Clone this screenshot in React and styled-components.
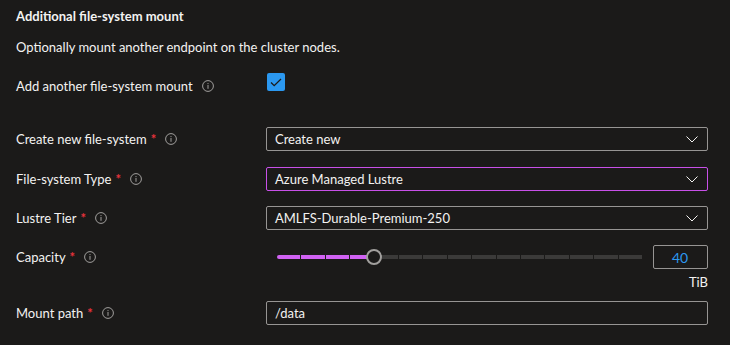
import React from 'react'
import styled, { createGlobalStyle } from 'styled-components'

const colors = {
  bg: '#1b1a19',
  text: '#f3f2f1',
  border: '#979593',
  focus: '#c850e8',
  fill: '#d062f2',
  rail: '#3b3a39',
  blue: '#2b98f0',
  required: '#e8323c',
  icon: '#a19f9d',
}

const GlobalStyle = createGlobalStyle`
  html, body {
    margin: 0;
    padding: 0;
    background: ${colors.bg};
  }
  body {
    font-family: Lato, 'Noto Sans', sans-serif;
    font-size: 13px;
    color: ${colors.text};
  }
`

const StRoot = styled.div`
  width: 730px;
  height: 345px;
  box-sizing: border-box;
  padding: 6px 22px 0 16px;
  background: ${colors.bg};
  display: flex;
  flex-direction: column;
`
const StTitle = styled.h2`
  margin: 0;
  font-size: 13px;
  font-weight: 700;
  line-height: 20px;
`
const StDescription = styled.p`
  margin: 11px 0 16px;
  line-height: 20px;
`
const StRow = styled.div`
  display: grid;
  grid-template-columns: 250px 442px;
  align-items: ${(p) => (p.$top ? 'start' : 'center')};
  margin-top: ${(p) => p.$gap || 0}px;
`
const StLabel = styled.div`
  display: flex;
  align-items: center;
  line-height: 20px;
  padding-top: ${(p) => p.$offset || 0}px;
`
const StRequired = styled.span`
  color: ${colors.required};
  margin-left: 4px;
  font-weight: 700;
`
const StInfo = styled.svg`
  width: 12px;
  height: 12px;
  margin-left: 9px;
  flex-shrink: 0;
`
const StCheckbox = styled.div`
  width: 18px;
  height: 18px;
  border-radius: 2px;
  background: ${colors.blue};
  display: flex;
  align-items: center;
  justify-content: center;
  margin-left: 1px;
`
const StBox = styled.div`
  height: 24px;
  box-sizing: border-box;
  border: 1px solid ${(p) => (p.$focused ? colors.focus : colors.border)};
  border-radius: 2px;
  display: flex;
  align-items: center;
  justify-content: ${(p) => (p.$center ? 'center' : 'space-between')};
  padding: 0 9px 0 8px;
  color: ${(p) => p.$color || colors.text};
`
const StField = styled.div`
  display: flex;
  flex-direction: column;
  align-items: flex-end;
`
const StSliderRow = styled.div`
  display: flex;
  align-items: center;
  gap: 11px;
  padding-left: 11px;
  align-self: stretch;
`
const StTrack = styled.div`
  flex: 1;
  height: 4px;
  position: relative;
  display: flex;
  gap: 1px;
`
const StSegment = styled.div`
  flex: 1;
  height: 4px;
  background: ${(p) => (p.$filled ? colors.fill : colors.rail)};
  &:first-child {
    border-radius: 2px 0 0 2px;
  }
  &:last-child {
    border-radius: 0 2px 2px 0;
  }
`
const StThumb = styled.div`
  position: absolute;
  top: 50%;
  width: 16px;
  height: 16px;
  box-sizing: border-box;
  border-radius: 50%;
  border: 2px solid ${colors.icon};
  background: ${colors.bg};
  transform: translate(-50%, -50%);
`
const StValue = styled(StBox)`
  width: 55px;
  font-size: 14px;
`
const StUnit = styled.div`
  line-height: 16px;
  margin-top: 5px;
  font-size: 13px;
`

const InfoIcon = () => (
  <StInfo viewBox='0 0 12 12'>
    <circle cx='6' cy='6' r='5.4' fill='none' stroke={colors.icon} strokeWidth='1' />
    <rect x='5.5' y='5' width='1' height='3.8' fill={colors.icon} />
    <circle cx='6' cy='3.6' r='0.6' fill={colors.icon} />
  </StInfo>
)

const Chevron = () => (
  <svg width='12' height='7' viewBox='0 0 12 7'>
    <path d='M0.5 0.5 L6 6 L11.5 0.5' fill='none' stroke={colors.text} strokeWidth='1' />
  </svg>
)

const Label = ({ children, required, offset }) => (
  <StLabel $offset={offset}>
    {children}
    {required && <StRequired>*</StRequired>}
    <InfoIcon />
  </StLabel>
)

const Dropdown = ({ value, focused }) => (
  <StBox $focused={focused}>
    <span>{value}</span>
    <Chevron />
  </StBox>
)

const SEGMENTS = 15
const FILLED = 4

const App = () => (
  <StRoot>
    <GlobalStyle />
    <StTitle>Additional file-system mount</StTitle>
    <StDescription>Optionally mount another endpoint on the cluster nodes.</StDescription>

    <StRow $top>
      <Label offset={3}>Add another file-system mount</Label>
      <StCheckbox>
        <svg width='12' height='9' viewBox='0 0 12 9'>
          <path d='M1 4.5 L4.2 7.7 L11 1' fill='none' stroke='#1b1a19' strokeWidth='1.3' />
        </svg>
      </StCheckbox>
    </StRow>

    <StRow $gap={31}>
      <Label required>Create new file-system</Label>
      <Dropdown value='Create new' />
    </StRow>
    <StRow $gap={16}>
      <Label required>File-system Type</Label>
      <Dropdown value='Azure Managed Lustre' focused />
    </StRow>
    <StRow $gap={15}>
      <Label required>Lustre Tier</Label>
      <Dropdown value='AMLFS-Durable-Premium-250' />
    </StRow>

    <StRow $gap={15} $top>
      <Label required offset={2}>Capacity</Label>
      <StField>
        <StSliderRow>
          <StTrack>
            {Array.from({ length: SEGMENTS }).map((_, i) => (
              <StSegment key={i} $filled={i < FILLED} />
            ))}
            <StThumb style={{ left: `${(FILLED / SEGMENTS) * 100}%` }} />
          </StTrack>
          <StValue $center $color={colors.blue}>40</StValue>
        </StSliderRow>
        <StUnit>TiB</StUnit>
      </StField>
    </StRow>

    <StRow $gap={11}>
      <Label required>Mount path</Label>
      <StBox>
        <span>/data</span>
      </StBox>
    </StRow>
  </StRoot>
)

export default App
